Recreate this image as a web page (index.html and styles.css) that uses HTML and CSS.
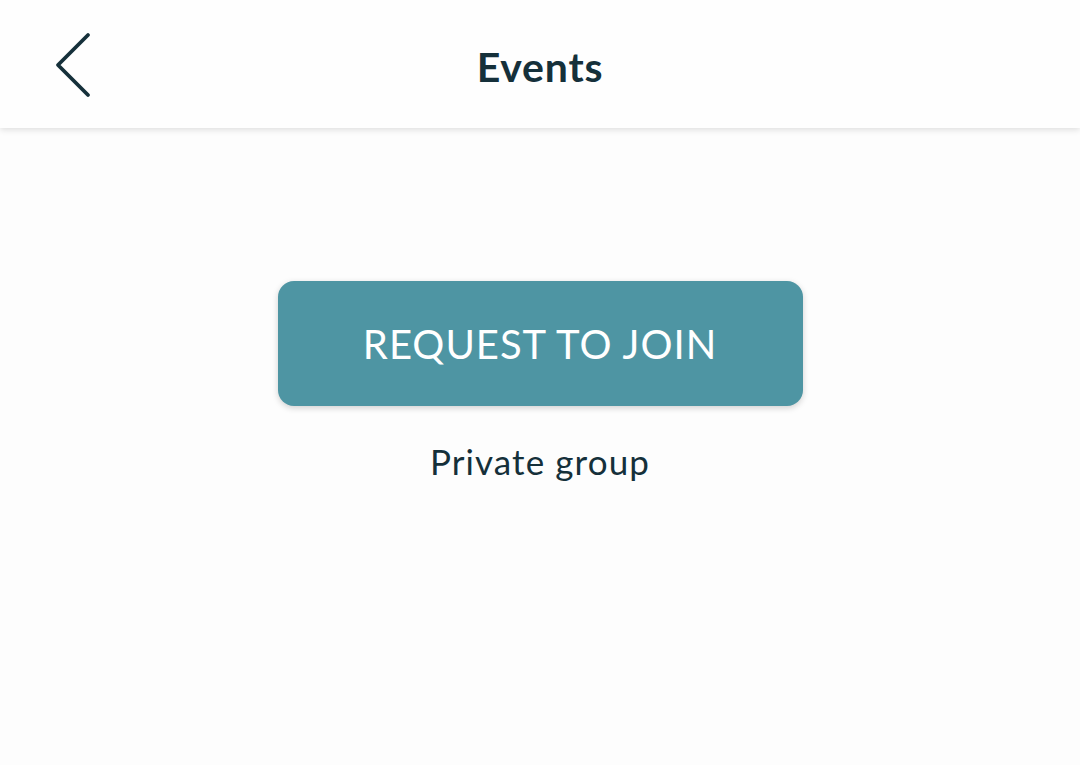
FILE: index.html
```html
<!DOCTYPE html>
<html>
<head>
<meta charset="utf-8">
<link rel="stylesheet" href="styles.css">
</head>
<body>
<header class="topbar">
  <button class="back" aria-label="Back">
    <svg width="40" height="70" viewBox="0 0 40 70"><path d="M33 3 L3 33 L33 63" fill="none" stroke="#15303a" stroke-width="3.8" stroke-linecap="round" stroke-linejoin="round"/></svg>
  </button>
  <h1 class="title">Events</h1>
</header>
<main class="content">
  <button class="join">REQUEST TO JOIN</button>
  <p class="note">Private group</p>
</main>
</body>
</html>
```
FILE: styles.css
```css
html, body {
  margin: 0;
  padding: 0;
  background: #fdfdfd;
  font-family: "Lato", "Open Sans", sans-serif;
  color: #15303a;
}
.topbar {
  position: relative;
  height: 128px;
  background: #fefefe;
  box-shadow: 0 2px 6px rgba(0,0,0,0.12);
  display: flex;
  align-items: center;
  justify-content: center;
}
.back {
  position: absolute;
  left: 55px;
  top: 32px;
  background: none;
  border: 0;
  padding: 0;
  width: 40px;
  height: 70px;
}
.title {
  margin: 4px 0 0;
  font-size: 41px;
  font-weight: 700;
  color: #15303a;
  letter-spacing: 0.8px;
}
.content {
  display: flex;
  flex-direction: column;
  align-items: center;
  padding-top: 153px;
}
.join {
  width: 525px;
  height: 125px;
  border: 0;
  border-radius: 16px;
  background: #4e95a3;
  color: #ffffff;
  font-family: "Lato", "Open Sans", sans-serif;
  font-size: 40px;
  font-weight: 400;
  letter-spacing: 1px;
  box-shadow: 0 2px 6px rgba(0,0,0,0.18);
}
.note {
  margin: 34px 0 0;
  font-size: 35px;
  color: #15303a;
  letter-spacing: 1.1px;
}
```
